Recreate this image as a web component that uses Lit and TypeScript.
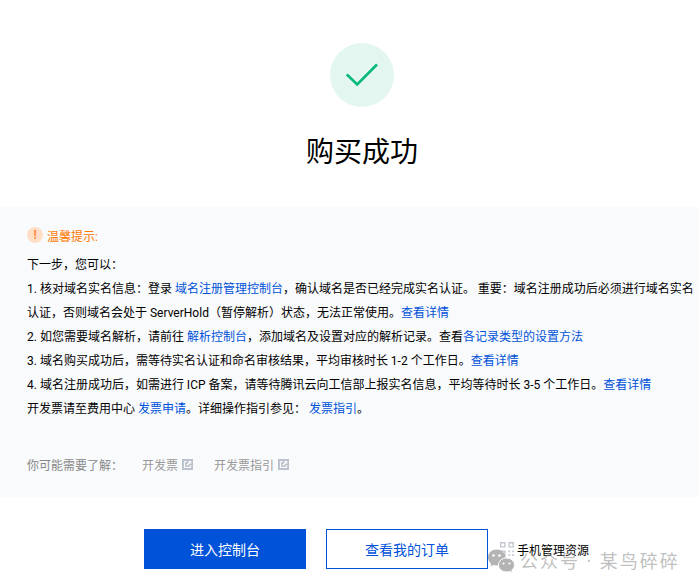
import { LitElement, html, css } from "lit";
import { customElement } from "lit/decorators.js";

const ext = html`<svg class="ext" viewBox="0 0 11 11" width="11" height="11"><rect width="11" height="11" fill="#bcc2cd"/><path d="M2.500 2.500h2.500M2.500 2.500v6h6V6" fill="none" stroke="#f9fafc" stroke-width="1.200"/><path d="M6 2h3.200v3.200L8.200 4.200 5.300 7 4.200 5.900 7 3z" fill="#f9fafc"/></svg>`;

@customElement("app-root")
export class AppRoot extends LitElement {
  static styles = css`
    :host { display: block; width: 699px; height: 588px; position: relative; overflow: hidden; background: #fff;
      font-family: Roboto, "Noto Sans CJK SC", sans-serif; font-size: 12px; color: #000; }
    .head { height: 207px; display: flex; flex-direction: column; align-items: center; padding: 43px 0 0 25px; box-sizing: border-box; }
    .circle { width: 64px; height: 64px; border-radius: 50%; background: #e3f7f0; display: flex; align-items: center; justify-content: center; }
    h1 { margin: 26px 0 0; font-size: 28px; line-height: 40px; font-weight: 400; color: #000; }
    .panel { height: 290px; box-sizing: border-box; background: #f9fafc; padding: 16px 0 0 27px; }
    .tip { display: flex; align-items: center; gap: 4px; height: 24px; color: #ff7800; }
    .tip-i { width: 16px; height: 16px; border-radius: 50%; background: #ffdfc7; color: #ff8a3c; display: flex; align-items: center; justify-content: center; font-size: 12px; font-weight: 700; line-height: 16px; }
    .lines { margin-top: 6px; line-height: 24px; color: #000; }
    .lines div { width: 668px; }
    a { color: #0052d9; text-decoration: none; }
    .more { display: flex; align-items: center; height: 24px; margin-top: 31px; color: #888; }
    .more span.label { width: 115px; }
    .more span.item { display: flex; align-items: center; gap: 4px; margin-right: 21px; color: #999; }
    .actions { display: flex; align-items: center; padding: 32px 0 0 144px; }
    .btn { width: 162px; height: 40px; box-sizing: border-box; display: flex; align-items: center; justify-content: center; font-size: 14px; }
    .primary { background: #0052d9; color: #fff; }
    .ghost { border: 1px solid #0052d9; color: #0052d9; margin-left: 20px; background: #fff; }
    .mobile { display: flex; align-items: center; gap: 3px; margin-left: 12px; color: #000; }
    .qr { fill: #c3c8d2; }
    .mark { position: absolute; left: 488px; top: 549px; display: flex; align-items: center; gap: 5px; color: rgba(150,150,150,0.62); font-size: 18px; line-height: 24px; letter-spacing: 2px; white-space: pre; }
  `;

  render() {
    return html`
      <div class="head">
        <div class="circle">
          <svg width="32" height="26" viewBox="0 0 32 26"><path d="M0.800 12.500L11.200 22.500L31 2.500" fill="none" stroke="#00b97a" stroke-width="2.600"/></svg>
        </div>
        <h1>购买成功</h1>
      </div>
      <div class="panel">
        <div class="tip"><span class="tip-i">!</span><span>温馨提示:</span></div>
        <div class="lines">
          <div>下一步，您可以：</div>
          <div>1. 核对域名实名信息：登录 <a>域名注册管理控制台</a>，确认域名是否已经完成实名认证。 重要：域名注册成功后必须进行域名实名认证，否则域名会处于 ServerHold（暂停解析）状态，无法正常使用。<a>查看详情</a></div>
          <div>2. 如您需要域名解析，请前往 <a>解析控制台</a>，添加域名及设置对应的解析记录。查看<a>各记录类型的设置方法</a></div>
          <div>3. 域名购买成功后，需等待实名认证和命名审核结果，平均审核时长 1-2 个工作日。<a>查看详情</a></div>
          <div>4. 域名注册成功后，如需进行 ICP 备案，请等待腾讯云向工信部上报实名信息，平均等待时长 3-5 个工作日。<a>查看详情</a></div>
          <div>开发票请至费用中心 <a>发票申请</a>。详细操作指引参见： <a>发票指引</a>。</div>
        </div>
        <div class="more">
          <span class="label">你可能需要了解：</span>
          <span class="item">开发票${ext}</span>
          <span class="item">开发票指引${ext}</span>
        </div>
      </div>
      <div class="actions">
        <div class="btn primary">进入控制台</div>
        <div class="btn ghost">查看我的订单</div>
        <div class="mobile">
          <svg class="qr" width="14" height="14" viewBox="0 0 15 15"><path d="M0 0h6v6H0zM1.500 1.500v3h3v-3zM9 0h6v6H9zM10.500 1.500v3h3v-3zM0 9h6v6H0zM1.500 10.500v3h3v-3zM9 9h2v2H9zM13 9h2v2h-2zM9 13h2v2H9zM13 13h2v2h-2z" fill-rule="evenodd"/></svg>
          <span>手机管理资源</span>
        </div>
      </div>
      <div class="mark">
        <svg width="27" height="25" viewBox="0 0 27 25">
          <path d="M8.500 0.500C13.500 0.500 17.500 4 17.500 8.500S13.500 16.500 8.500 16.500C7.300 16.500 6.300 16.300 5.300 16L2.500 17.500L3.200 14.700C1.300 13.200 0 11 0 8.500C0 4 3.800 0.500 8.500 0.500Z" fill="#b4b4b4"/>
          <circle cx="5.500" cy="6.500" r="1.300" fill="#fff"/><circle cx="11.500" cy="6.500" r="1.300" fill="#fff"/>
          <path d="M18.500 9C23 9 26.500 12.100 26.500 16C26.500 18.100 25.500 20 23.800 21.200L24.500 24L21.700 22.500C20.700 22.800 19.600 23 18.500 23C14 23 10.500 19.900 10.500 16S14 9 18.500 9Z" fill="#b4b4b4" stroke="#fff"/>
          <circle cx="15.500" cy="14.500" r="1.100" fill="#fff"/><circle cx="21.500" cy="14.500" r="1.100" fill="#fff"/>
        </svg>
        <span>公众号 · 某鸟碎碎</span>
      </div>
    `;
  }
}
